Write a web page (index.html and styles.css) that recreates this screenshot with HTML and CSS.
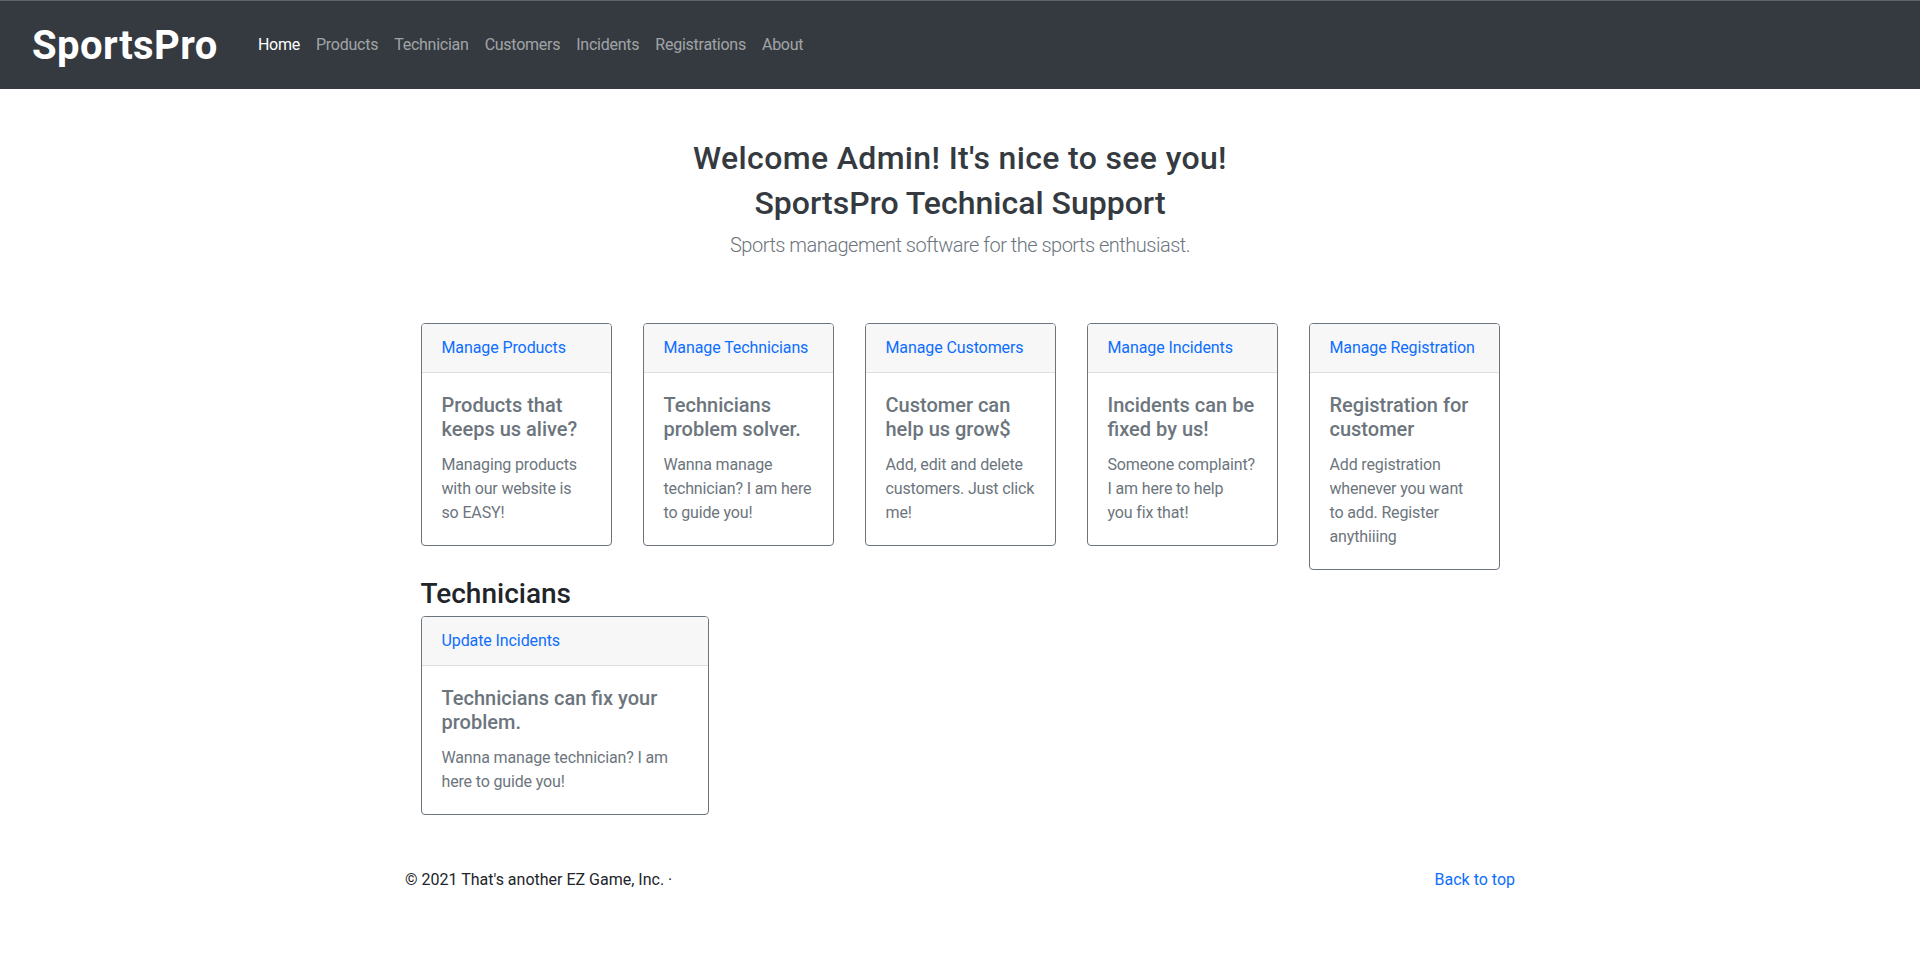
FILE: index.html
```html
<!DOCTYPE html>
<html lang="en">
<head>
<meta charset="utf-8">
<title>SportsPro</title>
<link rel="stylesheet" href="styles.css">
</head>
<body>
<nav class="navbar">
  <a class="brand" href="#">SportsPro</a>
  <ul class="nav">
    <li><a class="nav-link active" href="#">Home</a></li>
    <li><a class="nav-link" href="#">Products</a></li>
    <li><a class="nav-link" href="#">Technician</a></li>
    <li><a class="nav-link" href="#">Customers</a></li>
    <li><a class="nav-link" href="#">Incidents</a></li>
    <li><a class="nav-link" href="#">Registrations</a></li>
    <li><a class="nav-link" href="#">About</a></li>
  </ul>
</nav>

<main class="main">
  <section class="hero">
    <h2 class="hero-title">Welcome Admin! It's nice to see you!</h2>
    <h2 class="hero-title">SportsPro Technical Support</h2>
    <p class="lead">Sports management software for the sports enthusiast.</p>
  </section>

  <section class="board">
    <div class="card-row">
      <div class="card">
        <div class="card-header"><a href="#">Manage Products</a></div>
        <div class="card-body">
          <h5 class="card-title">Products that keeps us alive?</h5>
          <p class="card-text">Managing products with our website is so EASY!</p>
        </div>
      </div>
      <div class="card">
        <div class="card-header"><a href="#">Manage Technicians</a></div>
        <div class="card-body">
          <h5 class="card-title">Technicians problem solver.</h5>
          <p class="card-text">Wanna manage technician? I am here to guide you!</p>
        </div>
      </div>
      <div class="card">
        <div class="card-header"><a href="#">Manage Customers</a></div>
        <div class="card-body">
          <h5 class="card-title">Customer can help us grow$</h5>
          <p class="card-text">Add, edit and delete customers. Just click me!</p>
        </div>
      </div>
      <div class="card">
        <div class="card-header"><a href="#">Manage Incidents</a></div>
        <div class="card-body">
          <h5 class="card-title">Incidents can be fixed by us!</h5>
          <p class="card-text">Someone complaint? I am here to help you&nbsp;fix that!</p>
        </div>
      </div>
      <div class="card">
        <div class="card-header"><a href="#">Manage Registration</a></div>
        <div class="card-body">
          <h5 class="card-title">Registration for customer</h5>
          <p class="card-text">Add registration whenever you want to add. Register anythiiing</p>
        </div>
      </div>
    </div>

    <h3 class="section-title">Technicians</h3>
    <div class="card card-wide">
      <div class="card-header"><a href="#">Update Incidents</a></div>
      <div class="card-body">
        <h5 class="card-title">Technicians can fix your problem.</h5>
        <p class="card-text">Wanna manage technician? I am here to guide you!</p>
      </div>
    </div>
  </section>
</main>

<footer class="footer">
  <p class="copy">&copy; 2021 That's another EZ Game, Inc. &middot;</p>
  <a class="back" href="#">Back to top</a>
</footer>
</body>
</html>
```
FILE: styles.css
```css
* { box-sizing: border-box; }

html, body {
  margin: 0;
  padding: 0;
}

body {
  font-family: "Roboto", "Liberation Sans", sans-serif;
  font-size: 16px;
  line-height: 1.5;
  color: #212529;
  background: #fff;
}

a { text-decoration: none; color: #0d6efd; }

/* Navbar */
.navbar {
  display: flex;
  align-items: center;
  height: 89px;
  padding: 0 16px 0 32px;
  background: #343a40;
  border-top: 1px solid #5f6368;
}

.brand {
  font-size: 40px;
  font-weight: 700;
  line-height: 1;
  letter-spacing: 0.45px;
  color: #fff;
  margin-right: 32px;
  margin-top: 2px;
}

.nav {
  display: flex;
  list-style: none;
  margin: 0;
  padding: 0;
}

.nav-link {
  display: block;
  padding: 8px;
  letter-spacing: -0.25px;
  color: rgba(255, 255, 255, 0.55);
}

.nav-link.active { color: #fff; }

/* Hero */
.main { padding-top: 50px; }

.hero { text-align: center; }

.hero-title {
  margin: 0 0 7px;
  font-size: 32px;
  font-weight: 500;
  line-height: 1.2;
  color: #343a40;
}

.hero-title:first-child { letter-spacing: 0.35px; }

.lead {
  margin: 0;
  font-size: 20px;
  font-weight: 300;
  line-height: 30px;
  letter-spacing: -0.5px;
  color: #6c757d;
}

/* Cards */
.board {
  width: 1079px;
  margin: 63px auto 0;
}

.card-row {
  display: flex;
  align-items: flex-start;
  gap: 31px;
}

.card {
  width: 191px;
  border: 1px solid #6c757d;
  border-radius: 4px;
  background: #fff;
  overflow: hidden;
}

.card-wide { width: 288px; }

.card-header {
  padding: 12px 20px;
  background: #f7f7f7;
  border-bottom: 1px solid #dfdfdf;
  line-height: 24px;
  letter-spacing: -0.1px;
}

.card-body { padding: 20px; }

.card-title {
  margin: 0 0 12px;
  font-size: 20px;
  font-weight: 500;
  line-height: 24px;
  color: #6c757d;
}

.card-text {
  margin: 0;
  line-height: 24px;
  letter-spacing: -0.15px;
  color: #6c757d;
}

.section-title {
  margin: 7px 0 6px;
  font-size: 28px;
  font-weight: 500;
  line-height: 1.2;
  color: #212529;
}

/* Footer */
.footer {
  width: 1110px;
  margin: 53px auto 0;
  display: flex;
  justify-content: space-between;
  align-items: center;
  padding-bottom: 40px;
}

.copy { margin: 0; }
```
